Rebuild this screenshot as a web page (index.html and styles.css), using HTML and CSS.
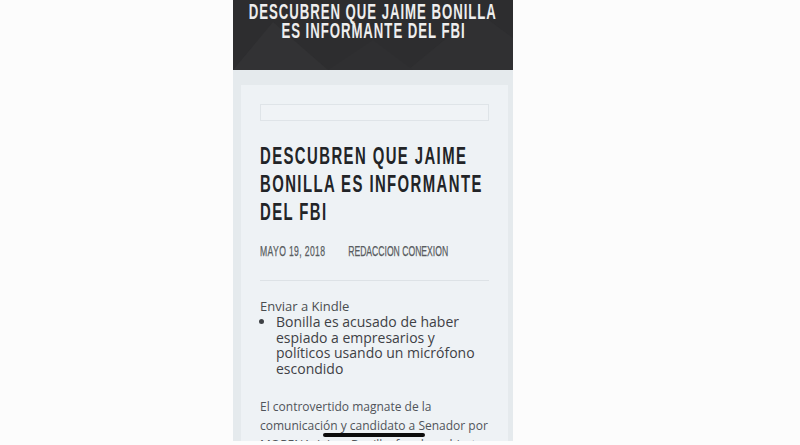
FILE: index.html
```html
<!DOCTYPE html>
<html lang="es">
<head>
<meta charset="utf-8">
<title>Descubren que Jaime Bonilla es informante del FBI</title>
<link rel="stylesheet" href="styles.css">
</head>
<body>
<div class="phone">
  <header class="site-header">
    <svg class="header-bg" viewBox="0 0 280 70" preserveAspectRatio="none" aria-hidden="true">
      <polygon points="0,70 40,22 95,70" fill="#323234"/>
      <polygon points="175,70 245,12 280,38 280,70" fill="#303032"/>
      <polygon points="95,70 140,40 180,70" fill="#2f2f31"/>
    </svg>
    <h1 class="site-title">
      <span class="title-line">DESCUBREN QUE JAIME BONILLA</span>
      <span class="title-line">ES INFORMANTE DEL FBI</span>
    </h1>
  </header>
  <main class="content">
    <article class="card">
      <div class="ad-box"></div>
      <h2 class="post-title">
        <span class="post-line">DESCUBREN QUE JAIME</span>
        <span class="post-line">BONILLA ES INFORMANTE</span>
        <span class="post-line">DEL FBI</span>
      </h2>
      <div class="post-meta">
        <div class="meta-row">
          <span class="meta-date">MAYO 19, 2018</span>
          <span class="meta-author">REDACCION CONEXION</span>
        </div>
      </div>
      <div class="post-body">
        <p class="kindle">Enviar a Kindle</p>
        <ul class="summary">
          <li>Bonilla es acusado de haber espiado a empresarios y políticos usando un micrófono escondido</li>
        </ul>
        <p class="para">El controvertido magnate de la comunicación y candidato a Senador por MORENA, Jaime Bonilla, fue descubierto como informante del FBI.</p>
      </div>
    </article>
  </main>
  <div class="home-indicator"></div>
</div>
</body>
</html>
```
FILE: styles.css
```css
html, body {
  margin: 0;
  padding: 0;
  background: #fcfcfc;
}
body {
  width: 800px;
  height: 445px;
  overflow: hidden;
}
.phone {
  position: relative;
  width: 280px;
  height: 441px;
  margin-left: 233px;
  background: #e5eaed;
  overflow: hidden;
}
.site-header {
  position: relative;
  height: 70px;
  background: #2d2d2f;
  overflow: hidden;
}
.header-bg {
  position: absolute;
  left: 0;
  top: 0;
  width: 100%;
  height: 100%;
}
.site-title {
  position: relative;
  margin: 0;
  padding-top: 3px;
  display: flex;
  flex-direction: column;
  align-items: center;
  font-family: "Liberation Sans", Arial, sans-serif;
  font-weight: 700;
  font-size: 22px;
  line-height: 18.5px;
  letter-spacing: 1.6px;
  color: #eeeeee;
}
.title-line {
  display: block;
  white-space: nowrap;
  transform: scaleX(0.6);
  transform-origin: center;
}
.content {
  padding: 15px 5px 0 8px;
}
.card {
  background: #eef2f5;
  padding: 19px 19px 0;
  height: 400px;
}
.ad-box {
  height: 15px;
  border: 1px solid #dfe4e8;
  background: #f0f3f6;
}
.post-title {
  margin: 21px 0 0;
  font-family: "Liberation Sans", Arial, sans-serif;
  font-weight: 700;
  font-size: 24px;
  line-height: 28px;
  letter-spacing: 2.3px;
  color: #222427;
}
.post-line {
  display: block;
  white-space: nowrap;
  transform: scaleX(0.62);
  transform-origin: left center;
}
.post-meta {
  margin-top: 17px;
  padding-bottom: 21px;
  border-bottom: 1px solid #dde2e6;
}
.meta-row {
  display: flex;
  gap: 37px;
  white-space: nowrap;
  transform: scaleX(0.615);
  transform-origin: left center;
  font-family: "Liberation Sans", Arial, sans-serif;
  font-weight: 400;
  font-size: 14px;
  line-height: 16px;
  color: #585c60;
  -webkit-text-stroke: 0.25px #585c60;
}
.meta-date {
  letter-spacing: 0.6px;
}
.meta-author {
  letter-spacing: 0;
}
.post-body {
  font-family: "Open Sans", "Noto Sans", sans-serif;
  color: #4a4d50;
}
.kindle {
  margin: 17px 0 0;
  font-size: 13px;
  line-height: 16px;
}
.summary {
  margin: 0;
  padding-left: 16px;
  font-size: 14px;
  line-height: 15.6px;
  color: #3e4145;
}
.para {
  margin: 21px 0 0;
  font-size: 12px;
  line-height: 19px;
  color: #50545a;
}
.home-indicator {
  position: absolute;
  left: 90px;
  bottom: 4px;
  width: 102px;
  height: 4px;
  border-radius: 2px;
  background: #0c0c0c;
}
```
